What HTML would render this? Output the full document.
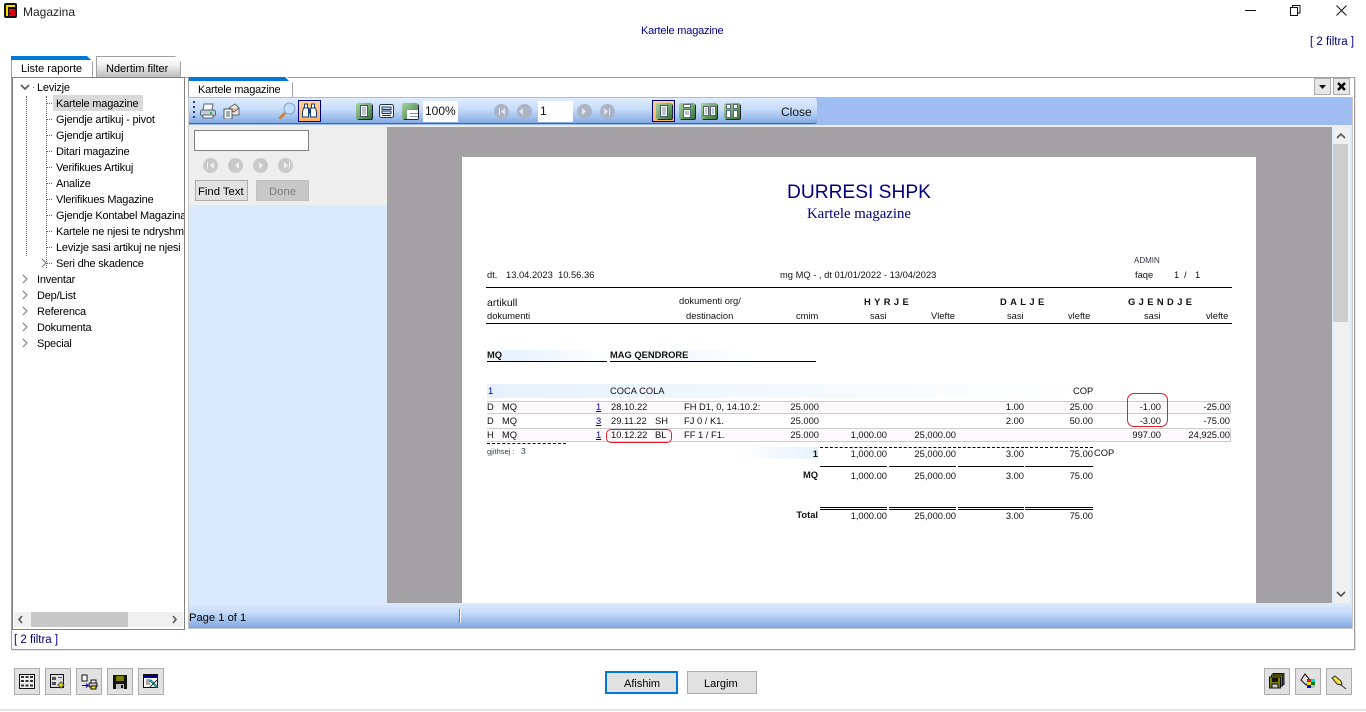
<!DOCTYPE html>
<html><head><meta charset="utf-8"><style>
html,body{margin:0;padding:0;width:1366px;height:712px;overflow:hidden;background:#fff}
body{position:relative;font-family:"Liberation Sans",sans-serif;font-size:11.5px;color:#000}
div,span.t,a,svg{position:absolute}
.t{position:absolute;white-space:nowrap;line-height:14px;height:14px}
.r{font-size:9.35px;color:#111;line-height:12px;height:12px}
.b{font-weight:bold}
.n{text-align:right;width:80px}
.tr{line-height:16px;height:16px;font-size:11px;letter-spacing:-.2px}
.btn{background:#e1e1e1;border:1px solid #adadad;box-sizing:border-box;width:26px;height:27px;top:668px}
.k{background:#000;height:1px}
.d{height:0;border-top:1px dashed #000}
.lk{color:#00a;text-decoration:underline}
.circ{width:15px;height:15px;border-radius:50%;background:#c9c9c9}
.circb{width:15px;height:15px;border-radius:50%;background:#aab4c6;top:104px}
.white{background:#fff}
.gicon{width:16px;height:16px;top:103px;background:linear-gradient(135deg,#a8d2a4,#6ea56c 55%,#2f6e36);border-radius:2px;box-shadow:1px 1px 0 #223}
</style></head><body>

<!-- window caption -->
<svg style="left:4px;top:3px" width="13" height="15" viewBox="0 0 13 15"><rect x="0" y="0" width="13" height="15" rx="2" fill="#111"/><rect x="2" y="2" width="9" height="2" fill="#ffd800"/><rect x="2" y="2" width="2" height="11" fill="#ffd800"/><path d="M5 6h6v2H7v1h4v4H5v-2h4v-1H5z" fill="#e8001c"/></svg>
<span class="t" style="left:23px;top:5px;font-size:12px;color:#222">Magazina</span>
<span class="t" style="left:641px;top:24px;font-size:11px;letter-spacing:-.2px;color:#000080">Kartele magazine</span>
<span class="t" style="left:1310px;top:35px;font-size:11.5px;color:#000080">[ 2 filtra ]</span>
<svg style="left:1240px;top:0" width="120" height="20" viewBox="0 0 120 20" fill="none" stroke="#111"><path d="M5 10.5h11"/><path d="M50.5 7.5h7v8h-7v-8zM52.5 7V5.500h7.500v7.500h-2"/><path d="M96.5 5.5l10 10M106.5 5.5l-10 10"/></svg>

<!-- outer tabs -->
<div style="left:11px;top:77px;width:1342px;height:571px;border:1px solid #a0a0a0;box-shadow:1px 1px 0 #e4e4e4"></div>
<div style="left:11px;top:56px;width:82px;height:22px;background:#fff;border-left:1px solid #a0a0a0;box-sizing:border-box;clip-path:polygon(0 0,76px 0,100% 6px,100% 100%,0 100%)"></div>
<div style="left:11px;top:56px;width:80px;height:4px;background:#0078d7;clip-path:polygon(0 0,76px 0,100% 100%,0 100%)"></div>
<div style="left:92px;top:62px;width:1px;height:16px;background:#a0a0a0"></div>
<span class="t" style="left:21px;top:62px;font-size:11px">Liste raporte</span>
<div style="left:96px;top:56px;width:85px;height:21px;background:linear-gradient(#fff,#f0f0f0 40%,#bdbdbd);border-left:1px solid #a0a0a0;border-right:1px solid #a0a0a0;border-top:1px solid #a0a0a0;box-sizing:border-box;clip-path:polygon(0 0,79px 0,100% 6px,100% 100%,0 100%)"></div>
<span class="t" style="left:106px;top:62px;font-size:11px">Ndertim filter</span>

<!-- tree -->
<div style="left:12px;top:77px;width:173px;height:553px;border:1px solid #808080;box-sizing:border-box;background:#fff;overflow:hidden">
  <div style="left:40px;top:17px;width:90px;height:16px;background:#d9d9d9"></div>
  <div style="left:13px;top:18px;height:160px;border-left:1px dotted #666"></div>
  <div style="left:33px;top:18px;height:172px;border-left:1px dotted #666"></div>
  <svg style="left:0;top:0" width="60" height="270" fill="none" stroke="#555"><path d="M8 7l4 4 4-4" stroke-width="1.6"/><path d="M29 181l4 4-4 4" stroke="#777"/><path d="M10 197l4 4-4 4M10 213l4 4-4 4M10 229l4 4-4 4M10 245l4 4-4 4M10 261l4 4-4 4" stroke="#777"/><path d="M34 25.500h6M34 41.500h6M34 57.500h6M34 73.500h6M34 89.500h6M34 105.500h6M34 121.500h6M34 137.500h6M34 153.500h6M34 169.500h6M34 185.500h6M20 9.500h2" stroke-dasharray="1 1" stroke="#666"/></svg>
  <span class="t tr" style="left:24px;top:2px">Levizje</span>
  <span class="t tr" style="left:43px;top:18px">Kartele magazine</span>
  <span class="t tr" style="left:43px;top:34px">Gjendje artikuj - pivot</span>
  <span class="t tr" style="left:43px;top:50px">Gjendje artikuj</span>
  <span class="t tr" style="left:43px;top:66px">Ditari magazine</span>
  <span class="t tr" style="left:43px;top:82px">Verifikues Artikuj</span>
  <span class="t tr" style="left:43px;top:98px">Analize</span>
  <span class="t tr" style="left:43px;top:114px">Vlerifikues Magazine</span>
  <span class="t tr" style="left:43px;top:130px">Gjendje Kontabel Magazina</span>
  <span class="t tr" style="left:43px;top:146px">Kartele ne njesi te ndryshme</span>
  <span class="t tr" style="left:43px;top:162px">Levizje sasi artikuj ne njesi</span>
  <span class="t tr" style="left:43px;top:178px">Seri dhe skadence</span>
  <span class="t tr" style="left:24px;top:194px">Inventar</span>
  <span class="t tr" style="left:24px;top:210px">Dep/List</span>
  <span class="t tr" style="left:24px;top:226px">Referenca</span>
  <span class="t tr" style="left:24px;top:242px">Dokumenta</span>
  <span class="t tr" style="left:24px;top:258px">Special</span>
  <div style="left:1px;top:534px;width:169px;height:15px;background:#f0f0f0"></div>
  <div style="left:18px;top:534px;width:97px;height:15px;background:#c8c8c8"></div>
  <svg style="left:0;top:534px" width="171" height="15" fill="none" stroke="#555" stroke-width="1.6"><path d="M9 4l-3 3.500 3 3.500M160 4l3 3.500-3 3.500"/></svg>
</div>
<span class="t" style="left:14px;top:633px;font-size:11.500px;color:#000080">[ 2 filtra ]</span>

<!-- inner tab -->
<div style="left:188px;top:77px;width:105px;height:21px;background:#fff;border-right:1px solid #a0a0a0;border-left:1px solid #a0a0a0;box-sizing:border-box;clip-path:polygon(0 0,99px 0,100% 6px,100% 100%,0 100%)"></div>
<div style="left:189px;top:77px;width:100px;height:4px;background:#0078d7;clip-path:polygon(0 0,96px 0,100% 100%,0 100%)"></div>
<span class="t" style="left:198px;top:83px;font-size:11px;letter-spacing:-.2px">Kartele magazine</span>
<div style="left:1314px;top:78px;width:17px;height:17px;background:#e6e6e6;border:1px solid #adadad;box-sizing:border-box"></div>
<svg style="left:1314px;top:78px" width="17" height="17"><path d="M5 7h7l-3.500 4z" fill="#111"/></svg>
<div style="left:1333px;top:78px;width:17px;height:17px;background:#e6e6e6;border:1px solid #adadad;box-sizing:border-box"></div>
<svg style="left:1333px;top:78px" width="17" height="17" fill="none" stroke="#000" stroke-width="2.400"><path d="M5 5l7 7M12 5l-7 7"/></svg>

<!-- main panel -->
<div style="left:188px;top:97px;width:1165px;height:532px;background:#dbe9fc;border:1px solid #c8c8c8;box-sizing:border-box"></div>
<div style="left:189px;top:97px;width:1163px;height:28px;background:#9fbdf3"></div>
<div style="left:189px;top:98px;width:628px;height:26px;background:linear-gradient(#e0edfd,#c6dcf9 45%,#86abe4);border-radius:0 3px 3px 0;border-bottom:1px solid #3c66b0;box-sizing:border-box"></div>
<div style="left:189px;top:125px;width:198px;height:80px;background:#eeeeee"></div>
<div style="left:387px;top:127px;width:945px;height:476px;background:#a3a1a3"></div>
<div style="left:387px;top:125px;width:965px;height:2px;background:#eee"></div>
<div style="left:462px;top:157px;width:794px;height:446px;background:#fff"></div>
<div style="left:1333px;top:127px;width:17px;height:476px;background:#f0f0f0"></div>
<div style="left:1333px;top:144px;width:15px;height:178px;background:#cdcdcd"></div>
<svg style="left:1333px;top:127px" width="17" height="476" fill="none" stroke="#555" stroke-width="1.600"><path d="M4 11l4-4 4 4M4 465l4 4 4-4"/></svg>
<div style="left:189px;top:604px;width:1163px;height:24px;background:linear-gradient(#dbe9fc,#c6dcf9 35%,#7fa7e0)"></div>
<span class="t" style="left:189px;top:611px;font-size:11.200px">Page 1 of 1</span>
<div style="left:459px;top:609px;width:1px;height:14px;background:#5a7fb8;box-shadow:1px 0 0 #fff"></div>

<!-- toolbar icons -->
<svg style="left:192px;top:100px" width="6" height="22" fill="#1c3f94"><rect x="1" y="1" width="2" height="2"/><rect x="1" y="6" width="2" height="2"/><rect x="1" y="11" width="2" height="2"/><rect x="1" y="16" width="2" height="2"/></svg>
<svg style="left:200px;top:103px" width="16" height="16"><path d="M4 1h9l-1 6H3z" fill="#fff" stroke="#567"/><rect x="0.500" y="7" width="15" height="6" rx="2" fill="#c3ccd8" stroke="#567"/><rect x="3" y="12" width="10" height="3" fill="#fff" stroke="#567"/><rect x="10" y="9" width="2" height="2" fill="#2b2"/></svg>
<svg style="left:223px;top:103px" width="17" height="16"><path d="M6 5l6-4 4 4v7H6z" fill="#f6e7d7" stroke="#567"/><path d="M6 5l5 4 5-4" fill="#e9c5a6" stroke="#567"/><rect x="1" y="6" width="8" height="10" fill="#fff" stroke="#456"/><path d="M3 9h4M3 11h4M3 13h4" stroke="#456"/></svg>
<svg style="left:278px;top:102px" width="18" height="18"><circle cx="11.500" cy="6.500" r="5.500" fill="#c3dcf7" stroke="#7fa3cc"/><path d="M7 11L1.500 16.500" stroke="#c57b2d" stroke-width="2.400"/></svg>
<div style="left:298px;top:100px;width:23px;height:22px;background:linear-gradient(#ffd394,#ffb060);border:1px solid #000080;box-sizing:border-box"></div>
<svg style="left:301px;top:103px" width="17" height="16" fill="#fff" stroke="#123a78"><path d="M3.500 1h3v4h-3zM10.500 1h3v4h-3z"/><path d="M2.500 5h5v9h-6v-5zM9.500 5h5l1 4v5h-6z"/><path d="M7.500 6h2v4h-2z" fill="#345"/></svg>

<div class="gicon" style="left:356px"></div>
<svg style="left:356px;top:103px" width="16" height="16" fill="#fff" stroke="#456"><rect x="4.500" y="2.500" width="7" height="11"/><path d="M6 5h4M6 7h4M6 9h4M6 11h4" stroke="#789"/></svg>
<svg style="left:379px;top:103px" width="15" height="16"><rect x="0.500" y="1.500" width="14" height="13" rx="2" fill="#fff" stroke="#234"/><path d="M3 4h9v2.500H3zM3 8h9v2.500H3zM3 12.500h9" fill="#c8d8ea" stroke="#123a78"/></svg>
<div class="gicon" style="left:402px"></div>
<div style="left:407px;top:110px;width:11px;height:9px;background:#fff"></div>
<svg style="left:407px;top:110px" width="11" height="9" stroke="#7a9fb0"><path d="M3 3.500h8M3 6.500h8"/></svg>
<div class="white" style="left:423px;top:101px;width:35px;height:21px"></div>
<span class="t" style="left:425px;top:104px;font-size:12px;color:#111">100%</span>
<div class="circb" style="left:494px"></div><div class="circb" style="left:517px"></div>
<div class="white" style="left:538px;top:101px;width:35px;height:21px"></div>
<span class="t" style="left:540px;top:104px;font-size:12px;color:#111">1</span>
<div class="circb" style="left:577px"></div><div class="circb" style="left:600px"></div>
<svg style="left:494px;top:104px" width="122" height="15" fill="#dfe5ef"><path d="M6 4v7H5V4zM11 4v7L7 7.500zM29 4v7L25 7.500zM88 4v7l4-3.500zM110 4v7l4-3.500zM116 4v7h-1V4z"/></svg>
<div style="left:652px;top:100px;width:23px;height:22px;background:linear-gradient(#ffd394,#ffb060);border:1px solid #000080;box-sizing:border-box"></div>
<div class="gicon" style="left:656px"></div>
<svg style="left:656px;top:103px" width="16" height="16" fill="#fff" stroke="#456"><rect x="4.500" y="2.500" width="7" height="11"/><path d="M6 5h4M6 7h4M6 9h4M6 11h4" stroke="#789"/></svg>
<div class="gicon" style="left:679px"></div><svg style="left:679px;top:103px" width="16" height="16" fill="#fff" stroke="#567"><rect x="4.500" y="1.500" width="7" height="3"/><path d="M4.500 6.500h7v8h-7z"/><path d="M6 9h4M6 11h4" stroke="#789"/></svg>
<div class="gicon" style="left:701px"></div><svg style="left:701px;top:103px" width="16" height="16" fill="#fff" stroke="#567"><rect x="2.500" y="3.500" width="5" height="9"/><rect x="9.500" y="3.500" width="5" height="9"/><path d="M4 6h2M4 8h2M4 10h2M11 6h2M11 8h2M11 10h2" stroke="#789"/></svg>
<div class="gicon" style="left:724px"></div><svg style="left:724px;top:103px" width="16" height="16" fill="#fff" stroke="#567"><rect x="2.500" y="1.500" width="4" height="4"/><rect x="9.500" y="1.500" width="4" height="4"/><rect x="2.500" y="7.500" width="4" height="7"/><rect x="9.500" y="7.500" width="4" height="7"/></svg>
<span class="t" style="left:781px;top:105px;font-size:12px;color:#111">Close</span>

<!-- find panel -->
<div style="left:194px;top:130px;width:115px;height:21px;background:#fff;border:1px solid #808080;box-sizing:border-box"></div>
<div class="circ" style="left:203px;top:158px"></div><div class="circ" style="left:228px;top:158px"></div><div class="circ" style="left:253px;top:158px"></div><div class="circ" style="left:278px;top:158px"></div>
<svg style="left:203px;top:158px" width="90" height="15" fill="#efefef"><path d="M5 4v7H4V4zM11 4v7L7 7.500zM36 4v7L32 7.500zM56 4v7l4-3.500zM81 4v7l4-3.500zM87 4v7h-1V4z"/></svg>
<div style="left:195px;top:180px;width:53px;height:21px;background:#e1e1e1;border:1px solid #adadad;box-sizing:border-box"></div>
<span class="t" style="left:198px;top:185px;font-size:11.300px">Find Text</span>
<div style="left:256px;top:180px;width:53px;height:21px;background:#c8c8c8;border:1px solid #c0c0c0;box-sizing:border-box"></div>
<span class="t" style="left:269px;top:185px;font-size:11.300px;color:#7d7d7d">Done</span>

<!-- report -->
<span class="t" style="left:787px;top:181px;height:24px;line-height:24px;font-size:19.200px;color:#000080">DURRESI SHPK</span>
<span class="t" style="left:807px;top:205px;height:18px;line-height:18px;font-family:'Liberation Serif',serif;font-size:14.800px;color:#000080">Kartele magazine</span>

<span class="t r" style="left:1134px;top:255px;font-size:8px;color:#334">ADMIN</span>
<span class="t r" style="left:487px;top:269px">dt.</span>
<span class="t r" style="left:506px;top:269px">13.04.2023</span>
<span class="t r" style="left:558px;top:269px">10.56.36</span>
<span class="t r" style="left:780px;top:269px">mg MQ - , dt 01/01/2022 - 13/04/2023</span>
<span class="t r" style="left:1135px;top:269px">faqe</span>
<span class="t r" style="left:1174px;top:269px">1</span>
<span class="t r" style="left:1184px;top:269px">/</span>
<span class="t r" style="left:1195px;top:269px">1</span>
<div class="k" style="left:486px;top:287px;width:746px"></div>

<span class="t r" style="left:487px;top:297px;font-size:10.500px">artikull</span>
<span class="t r" style="left:679px;top:295px">dokumenti org/</span>
<span class="t r b" style="left:864px;top:296px;letter-spacing:3.400px">HYRJE</span>
<span class="t r b" style="left:1000px;top:296px;letter-spacing:3.400px">DALJE</span>
<span class="t r b" style="left:1128px;top:296px;letter-spacing:3.400px">GJENDJE</span>
<span class="t r" style="left:487px;top:310px">dokumenti</span>
<span class="t r" style="left:686px;top:310px">destinacion</span>
<span class="t r" style="left:796px;top:310px">cmim</span>
<span class="t r" style="left:870px;top:310px">sasi</span>
<span class="t r" style="left:931px;top:310px">Vlefte</span>
<span class="t r" style="left:1007px;top:310px">sasi</span>
<span class="t r" style="left:1068px;top:310px">vlefte</span>
<span class="t r" style="left:1144px;top:310px">sasi</span>
<span class="t r" style="left:1206px;top:310px">vlefte</span>
<div class="k" style="left:486px;top:323px;width:746px"></div>

<div style="left:487px;top:350px;width:120px;height:11px;background:linear-gradient(90deg,#fff,#e6f1fd 15%,#fff)"></div>
<div style="left:610px;top:350px;width:206px;height:11px;background:linear-gradient(90deg,#fff,#f2f7fe 30%,#fff 70%)"></div>
<span class="t r b" style="left:487px;top:349px">MQ</span>
<span class="t r b" style="left:610px;top:349px">MAG QENDRORE</span>
<div class="k" style="left:487px;top:361px;width:120px"></div>
<div class="k" style="left:610px;top:361px;width:206px"></div>

<div style="left:487px;top:384px;width:600px;height:14px;background:linear-gradient(90deg,#e6f1fd,#f4f9fe 50%,#fff)"></div>
<span class="t r" style="left:488px;top:385px;color:#00a">1</span>
<span class="t r" style="left:610px;top:385px">COCA COLA</span>
<span class="t r" style="left:1073px;top:385px">COP</span>

<div style="left:487px;top:401px;width:744px;height:13px;background:#fdf9fd;border:1px solid #ccc;border-width:1px 1px 1px 0;box-sizing:border-box"></div>
<div style="left:487px;top:428px;width:744px;height:14px;background:#fdf9fd;border:1px solid #ccc;border-width:1px 1px 1px 0;box-sizing:border-box"></div>

<span class="t r" style="left:487px;top:401px">D</span><span class="t r" style="left:502px;top:401px">MQ</span><span class="t r lk" style="left:596px;top:401px">1</span><span class="t r" style="left:611px;top:401px">28.10.22</span><span class="t r" style="left:684px;top:401px">FH D1, 0, 14.10.2:</span>
<span class="t r n" style="left:739px;top:401px">25.000</span><span class="t r n" style="left:944px;top:401px">1.00</span><span class="t r n" style="left:1013px;top:401px">25.00</span><span class="t r n" style="left:1081px;top:401px">-1.00</span><span class="t r n" style="left:1150px;top:401px">-25.00</span>

<span class="t r" style="left:487px;top:415px">D</span><span class="t r" style="left:502px;top:415px">MQ</span><span class="t r lk" style="left:596px;top:415px">3</span><span class="t r" style="left:611px;top:415px">29.11.22</span><span class="t r" style="left:655px;top:415px">SH</span><span class="t r" style="left:684px;top:415px">FJ 0 / K1.</span>
<span class="t r n" style="left:739px;top:415px">25.000</span><span class="t r n" style="left:944px;top:415px">2.00</span><span class="t r n" style="left:1013px;top:415px">50.00</span><span class="t r n" style="left:1081px;top:415px">-3.00</span><span class="t r n" style="left:1150px;top:415px">-75.00</span>

<span class="t r" style="left:487px;top:429px">H</span><span class="t r" style="left:502px;top:429px">MQ</span><span class="t r lk" style="left:596px;top:429px">1</span><span class="t r" style="left:611px;top:429px">10.12.22</span><span class="t r" style="left:655px;top:429px">BL</span><span class="t r" style="left:684px;top:429px">FF 1 / F1.</span>
<span class="t r n" style="left:739px;top:429px">25.000</span><span class="t r n" style="left:807px;top:429px">1,000.00</span><span class="t r n" style="left:876px;top:429px">25,000.00</span><span class="t r n" style="left:1081px;top:429px">997.00</span><span class="t r n" style="left:1150px;top:429px">24,925.00</span>

<div style="left:606px;top:429px;width:66px;height:14px;border:1px solid #e01e2e;border-radius:5px;box-sizing:border-box"></div>
<div style="left:1127px;top:393px;width:41px;height:34px;border:1px solid #e01e2e;border-radius:7px;box-sizing:border-box"></div>

<div class="d" style="left:487px;top:443px;width:79px"></div>
<span class="t r" style="left:487px;top:446px;font-size:7.500px;color:#345">gjithsej :</span>
<span class="t r" style="left:521px;top:445px;font-size:8.500px;color:#345">3</span>

<div style="left:740px;top:447px;width:78px;height:12px;background:linear-gradient(90deg,#fff,#e6f1fd)"></div>
<span class="t r b n" style="left:738px;top:448px">1</span>
<div class="d" style="left:820px;top:447px;width:67px"></div><div class="d" style="left:889px;top:447px;width:67px"></div><div class="d" style="left:958px;top:447px;width:66px"></div><div class="d" style="left:1025px;top:447px;width:68px"></div>
<span class="t r n" style="left:807px;top:448px">1,000.00</span><span class="t r n" style="left:876px;top:448px">25,000.00</span><span class="t r n" style="left:944px;top:448px">3.00</span><span class="t r n" style="left:1013px;top:448px">75.00</span>
<span class="t r" style="left:1094px;top:447px">COP</span>

<div class="k" style="left:820px;top:466px;width:67px"></div><div class="k" style="left:889px;top:466px;width:67px"></div><div class="k" style="left:958px;top:466px;width:66px"></div><div class="k" style="left:1025px;top:466px;width:68px"></div>
<span class="t r b n" style="left:738px;top:469px">MQ</span>
<span class="t r n" style="left:807px;top:470px">1,000.00</span><span class="t r n" style="left:876px;top:470px">25,000.00</span><span class="t r n" style="left:944px;top:470px">3.00</span><span class="t r n" style="left:1013px;top:470px">75.00</span>

<div class="k" style="left:820px;top:507px;width:67px"></div><div class="k" style="left:889px;top:507px;width:67px"></div><div class="k" style="left:958px;top:507px;width:66px"></div><div class="k" style="left:1025px;top:507px;width:68px"></div>
<div class="k" style="left:820px;top:509px;width:67px"></div><div class="k" style="left:889px;top:509px;width:67px"></div><div class="k" style="left:958px;top:509px;width:66px"></div><div class="k" style="left:1025px;top:509px;width:68px"></div>
<span class="t r b n" style="left:738px;top:509px">Total</span>
<span class="t r n" style="left:807px;top:510px">1,000.00</span><span class="t r n" style="left:876px;top:510px">25,000.00</span><span class="t r n" style="left:944px;top:510px">3.00</span><span class="t r n" style="left:1013px;top:510px">75.00</span>

<!-- bottom buttons -->
<div class="btn" style="left:14px"></div>
<svg style="left:19px;top:674px" width="16" height="15"><rect x="0.500" y="0.500" width="15" height="14" fill="#eee" stroke="#111"/><path d="M2 2h3v2H2zM6.500 2h3v2h-3zM11 2h3v2h-3zM2 6h3v2H2zM6.500 6h3v2h-3zM11 6h3v2h-3zM2 10.500h3v2H2zM6.500 10.500h3v2h-3zM11 10.500h3v2h-3z" fill="#333"/></svg>
<div class="btn" style="left:45px"></div>
<svg style="left:50px;top:674px" width="16" height="16"><rect x="0.500" y="0.500" width="13" height="13" fill="#ddd" stroke="#111"/><path d="M2 3h4v3H2zM8 3h4v1H8zM2 8h4v3H2z" fill="#555"/><path d="M11 8l3 3-3 3-3-3z" fill="#e6d000" stroke="#555"/></svg>
<div class="btn" style="left:76px"></div>
<svg style="left:81px;top:674px" width="17" height="16" fill="none"><rect x="1" y="1" width="5" height="6" fill="#fff" stroke="#111"/><path d="M1 11.500h6M5 9.500l2 2-2 2" stroke="#00c"/><rect x="8" y="9" width="8" height="4" rx="1" fill="#ccc" stroke="#111"/><rect x="10" y="6" width="5" height="3" fill="#fff" stroke="#111"/><rect x="10" y="12" width="5" height="3" fill="#ee0" stroke="#111"/></svg>
<div class="btn" style="left:107px"></div>
<svg style="left:113px;top:675px" width="14" height="14"><path d="M0 0h14v14H0z" fill="#111"/><rect x="3" y="1" width="8" height="5" fill="#808000"/><rect x="3" y="9" width="8" height="5" fill="#c0c0c0"/><rect x="8" y="10" width="2" height="3" fill="#111"/></svg>
<div class="btn" style="left:138px"></div>
<svg style="left:143px;top:674px" width="16" height="15"><rect x="0.500" y="0.500" width="14" height="13" fill="#fff" stroke="#111"/><rect x="1" y="1" width="13" height="3" fill="#000090"/><path d="M3 6h4M3 8h4M3 10h4" stroke="#555"/><path d="M7 6l7 7" stroke="#1a9a9a" stroke-width="2.500"/><path d="M14 6l-7 7" stroke="#333"/></svg>

<div style="left:605px;top:671px;width:73px;height:23px;background:#e1e1e1;border:2px solid #0078d7;box-sizing:border-box"></div>
<span class="t" style="left:624px;top:677px;font-size:11px">Afishim</span>
<div style="left:687px;top:671px;width:70px;height:23px;background:#e1e1e1;border:1px solid #adadad;box-sizing:border-box"></div>
<span class="t" style="left:704px;top:677px;font-size:11px">Largim</span>

<div class="btn" style="left:1264px"></div>
<svg style="left:1269px;top:673px" width="16" height="16"><rect x="4" y="0.500" width="11" height="11" fill="#808000" stroke="#111"/><rect x="2.500" y="2" width="11" height="11" fill="#808000" stroke="#111"/><rect x="0.500" y="4" width="11" height="11" fill="#808000" stroke="#111"/><rect x="3" y="5" width="6" height="4" fill="#111"/><rect x="3" y="11" width="6" height="4" fill="#ccc" stroke="#111"/></svg>
<div class="btn" style="left:1295px"></div>
<svg style="left:1300px;top:673px" width="17" height="17"><path d="M5 1l5 6-4 5-5-5z" fill="#ddd" stroke="#111"/><rect x="7" y="6" width="4" height="3" fill="#e01010"/><rect x="11" y="6" width="4" height="3" fill="#00d8e0"/><rect x="7" y="9" width="4" height="3" fill="#e8e000"/><rect x="11" y="9" width="4" height="3" fill="#0a7a10"/><rect x="7" y="12" width="4" height="3" fill="#1010d0"/><rect x="11" y="12" width="4" height="3" fill="#bbb"/></svg>
<div class="btn" style="left:1326px"></div>
<svg style="left:1331px;top:674px" width="16" height="16"><path d="M1 4l3-2 6 5 1 3-2 1-3-1z" fill="#f2e33c" stroke="#333"/><path d="M9 10l6 5" stroke="#333"/></svg>

<div style="left:0;top:709px;width:1366px;height:2px;background:#e3e3e3"></div>
</body></html>
